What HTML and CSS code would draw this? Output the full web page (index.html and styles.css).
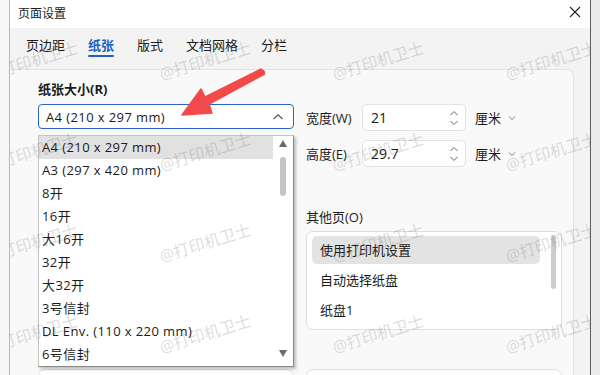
FILE: index.html
```html
<!DOCTYPE html>
<html lang="zh-CN">
<head>
    <meta charset="UTF-8">
    <title>页面设置</title>
    <link rel="stylesheet" href="styles.css">
</head>
<body>
    <div class="window">
        <div class="titlebar">
            <span class="title">页面设置</span>
            <svg class="close" width="12" height="12" viewBox="0 0 12 12"><path d="M1 1L11 11M11 1L1 11" stroke="#222" stroke-width="1.1" fill="none"/></svg>
        </div>

        <div class="tabs">
            <span class="tab">页边距</span>
            <span class="tab active">纸张</span>
            <span class="tab">版式</span>
            <span class="tab">文档网格</span>
            <span class="tab">分栏</span>
        </div>

        <div class="panel">
            <div class="section-title">纸张大小(R)</div>
            <div class="size-row">
                <div class="size-left">
                    <div class="select">
                        <span>A4 (210 x 297 mm)</span>
                        <svg width="12" height="8" viewBox="0 0 12 8"><path d="M1.5 6L6 1.8L10.5 6" stroke="#555" stroke-width="1.2" fill="none"/></svg>
                    </div>
                    <div class="dropdown">
                        <ul class="options">
                            <li class="selected">A4 (210 x 297 mm)</li>
                            <li>A3 (297 x 420 mm)</li>
                            <li>8开</li>
                            <li>16开</li>
                            <li>大16开</li>
                            <li>32开</li>
                            <li>大32开</li>
                            <li>3号信封</li>
                            <li>DL Env. (110 x 220 mm)</li>
                            <li>6号信封</li>
                        </ul>
                        <div class="scrollbar">
                            <span class="arrow-up"></span>
                            <span class="thumb"></span>
                            <span class="arrow-down"></span>
                        </div>
                    </div>
                </div>
                <div class="size-right">
                    <div class="field">
                        <span class="field-label">宽度(W)</span>
                        <div class="spin">
                            <span>21</span>
                            <svg width="10" height="18" viewBox="0 0 10 18"><path d="M1.5 6L5 2.5L8.5 6M1.5 12L5 15.5L8.5 12" stroke="#666" stroke-width="1" fill="none"/></svg>
                        </div>
                        <span class="unit">厘米 <svg width="8" height="6" viewBox="0 0 8 6"><path d="M1 1.5L4 4.5L7 1.5" stroke="#777" stroke-width="1" fill="none"/></svg></span>
                    </div>
                    <div class="field">
                        <span class="field-label">高度(E)</span>
                        <div class="spin">
                            <span>29.7</span>
                            <svg width="10" height="18" viewBox="0 0 10 18"><path d="M1.5 6L5 2.5L8.5 6M1.5 12L5 15.5L8.5 12" stroke="#666" stroke-width="1" fill="none"/></svg>
                        </div>
                        <span class="unit">厘米 <svg width="8" height="6" viewBox="0 0 8 6"><path d="M1 1.5L4 4.5L7 1.5" stroke="#777" stroke-width="1" fill="none"/></svg></span>
                    </div>
                </div>
            </div>

            <div class="source-row">
                <div class="source-col">
                    <div class="section-label">首页(F)</div>
                    <div class="listbox">
                        <ul class="items">
                            <li class="selected">使用打印机设置</li>
                            <li>自动选择纸盘</li>
                            <li>纸盘1</li>
                        </ul>
                        <span class="list-thumb"></span>
                    </div>
                </div>
                <div class="source-col">
                    <div class="section-label">其他页(O)</div>
                    <div class="listbox">
                        <ul class="items">
                            <li class="selected">使用打印机设置</li>
                            <li>自动选择纸盘</li>
                            <li>纸盘1</li>
                        </ul>
                        <span class="list-thumb"></span>
                    </div>
                </div>
            </div>

            <div class="bottom-row">
                <div class="box"></div>
                <div class="box"></div>
            </div>
        </div>

        <!-- watermark overlay -->
        <div class="watermarks">
            <span>@打印机卫士</span><span>@打印机卫士</span><span>@打印机卫士</span><span>@打印机卫士</span>
            <span>@打印机卫士</span><span>@打印机卫士</span><span>@打印机卫士</span><span>@打印机卫士</span>
            <span>@打印机卫士</span><span>@打印机卫士</span><span>@打印机卫士</span><span>@打印机卫士</span>
            <span>@打印机卫士</span><span>@打印机卫士</span><span>@打印机卫士</span><span>@打印机卫士</span>
        </div>

        <svg class="pointer" width="600" height="375" viewBox="0 0 600 375">
            <polygon points="182,115 201,89 205,97 261,69 264,71 264.5,74 209,104 212,113" fill="#f24a4a" stroke="#f24a4a" stroke-width="1.5" stroke-linejoin="round"/>
        </svg>
    </div>
</body>
</html>
```

FILE: styles.css
```css
body {
    margin: 0;
    width: 600px;
    height: 375px;
    overflow: hidden;
    background: linear-gradient(to right, #f7f7f7 9px, #ececec 9px);
    font-family: "Open Sans", "Noto Sans CJK SC", sans-serif;
    font-size: 13px;
    color: #1b1b1b;
}
ul {
    list-style: none;
    margin: 0;
    padding: 0;
}
.window {
    position: relative;
    margin-left: 9px;
    width: 582px;
    height: 375px;
    overflow: hidden;
    box-sizing: border-box;
    border-left: 1px solid #b9b9b9;
    border-right: 1px solid #5c5c5c;
    background-color: #f3f3f3;
}
.titlebar {
    height: 28px;
    display: flex;
    align-items: center;
    justify-content: space-between;
    padding: 0 9px 0 8px;
    background-color: #fff;
}
.title {
    font-size: 12px;
    margin-top: -2px;
}
.close {
    margin-top: -4px;
}

/* tabs */
.tabs {
    display: flex;
    gap: 23px;
    height: 41px;
    padding-left: 16px;
    box-sizing: border-box;
}
.tab {
    position: relative;
    padding-top: 7px;
    line-height: 20px;
}
.tab.active {
    color: #1d5fc2;
    font-weight: bold;
}
.tab.active::after {
    content: "";
    position: absolute;
    left: 0;
    right: 0;
    top: 27px;
    height: 2px;
    border-radius: 1px;
    background-color: #1d5fc2;
}

/* paper panel */
.panel {
    height: 320px;
    margin-right: 16px;
    padding: 9px 0 0 28px;
    background-color: #f9f9f9;
    border-top: 1px solid #e3e3e3;
    border-right: 1px solid #e3e3e3;
    border-top-right-radius: 7px;
}
.section-title {
    font-weight: bold;
    line-height: 20px;
    margin-bottom: 5px;
}
.size-row {
    display: flex;
    gap: 12px;
    height: 63px;
}
.size-left {
    position: relative;
    width: 256px;
}
.select {
    height: 25px;
    display: flex;
    align-items: center;
    justify-content: space-between;
    padding: 0 9px 0 7px;
    border: 1px solid #2b63c9;
    border-radius: 4px;
    background-color: #fff;
    box-sizing: border-box;
    letter-spacing: 0.4px;
}
.dropdown {
    position: absolute;
    top: 31px;
    left: 0;
    width: 256px;
    height: 232px;
    display: flex;
    background-color: #fff;
    border: 1px solid #c4c4c4;
    border-right-color: #8a8a8a;
    border-bottom-color: #8a8a8a;
    box-sizing: border-box;
    box-shadow: 2px 2px 3px rgba(0,0,0,0.25);
    z-index: 2;
}
.options {
    flex: 1;
    letter-spacing: 0.4px;
}
.options li {
    height: 23px;
    line-height: 23px;
    padding-left: 3px;
    white-space: nowrap;
}
.options li.selected {
    background-color: #e1e1e1;
}
.scrollbar {
    width: 20px;
    position: relative;
}
.arrow-up, .arrow-down {
    position: absolute;
    left: 6px;
    width: 0;
    height: 0;
    border-left: 4px solid transparent;
    border-right: 4px solid transparent;
}
.arrow-up {
    top: 4px;
    border-bottom: 7px solid #6a6a6a;
}
.arrow-down {
    bottom: 9px;
    border-top: 7px solid #6a6a6a;
}
.thumb {
    position: absolute;
    top: 21px;
    left: 7px;
    width: 6px;
    height: 39px;
    border-radius: 3px;
    background-color: #c4c4c4;
}

/* width / height */
.size-right {
    display: flex;
    flex-direction: column;
    gap: 9px;
}
.field {
    display: flex;
    align-items: center;
}
.field-label {
    width: 56px;
}
.spin {
    width: 104px;
    height: 27px;
    display: flex;
    align-items: center;
    justify-content: space-between;
    padding: 0 6px 0 8px;
    box-sizing: border-box;
    background-color: #fff;
    border: 1px solid #e2e2e2;
    border-radius: 5px;
}
.spin span {
    font-size: 14px;
}
.unit {
    margin-left: 9px;
    display: flex;
    align-items: center;
    gap: 7px;
}

/* paper source */
.source-row {
    display: flex;
    gap: 12px;
    margin-top: 40px;
}
.source-col {
    width: 256px;
}
.section-label {
    line-height: 20px;
    margin-bottom: 4px;
}
.listbox {
    position: relative;
    height: 99px;
    padding: 4px 21px 0 5px;
    box-sizing: border-box;
    background-color: #fff;
    border: 1px solid #dedede;
    border-radius: 7px;
}
.items li {
    height: 28px;
    line-height: 28px;
    padding-left: 8px;
    margin-bottom: 2px;
    border-radius: 5px;
}
.items li.selected {
    background-color: #e3e3e3;
}
.list-thumb {
    position: absolute;
    top: 3px;
    right: 5px;
    width: 5px;
    height: 54px;
    border-radius: 3px;
    background-color: #cdcdcd;
}
.bottom-row {
    display: flex;
    gap: 12px;
    margin-top: 39px;
}
.box {
    width: 256px;
    height: 30px;
    box-sizing: border-box;
    background-color: #fff;
    border: 1px solid #dedede;
    border-radius: 7px;
}

/* overlays */
.watermarks {
    position: absolute;
    top: 62px;
    left: 1px;
    display: grid;
    grid-template-columns: repeat(4, 173px);
    grid-auto-rows: 91px;
    pointer-events: none;
    z-index: 3;
}
.watermarks span {
    font-size: 16px;
    line-height: 18px;
    color: rgba(90,90,90,0.22);
    white-space: nowrap;
    transform: rotate(-17deg);
    transform-origin: left bottom;
}
.pointer {
    position: absolute;
    top: 0;
    left: -10px;
    z-index: 4;
}
```
